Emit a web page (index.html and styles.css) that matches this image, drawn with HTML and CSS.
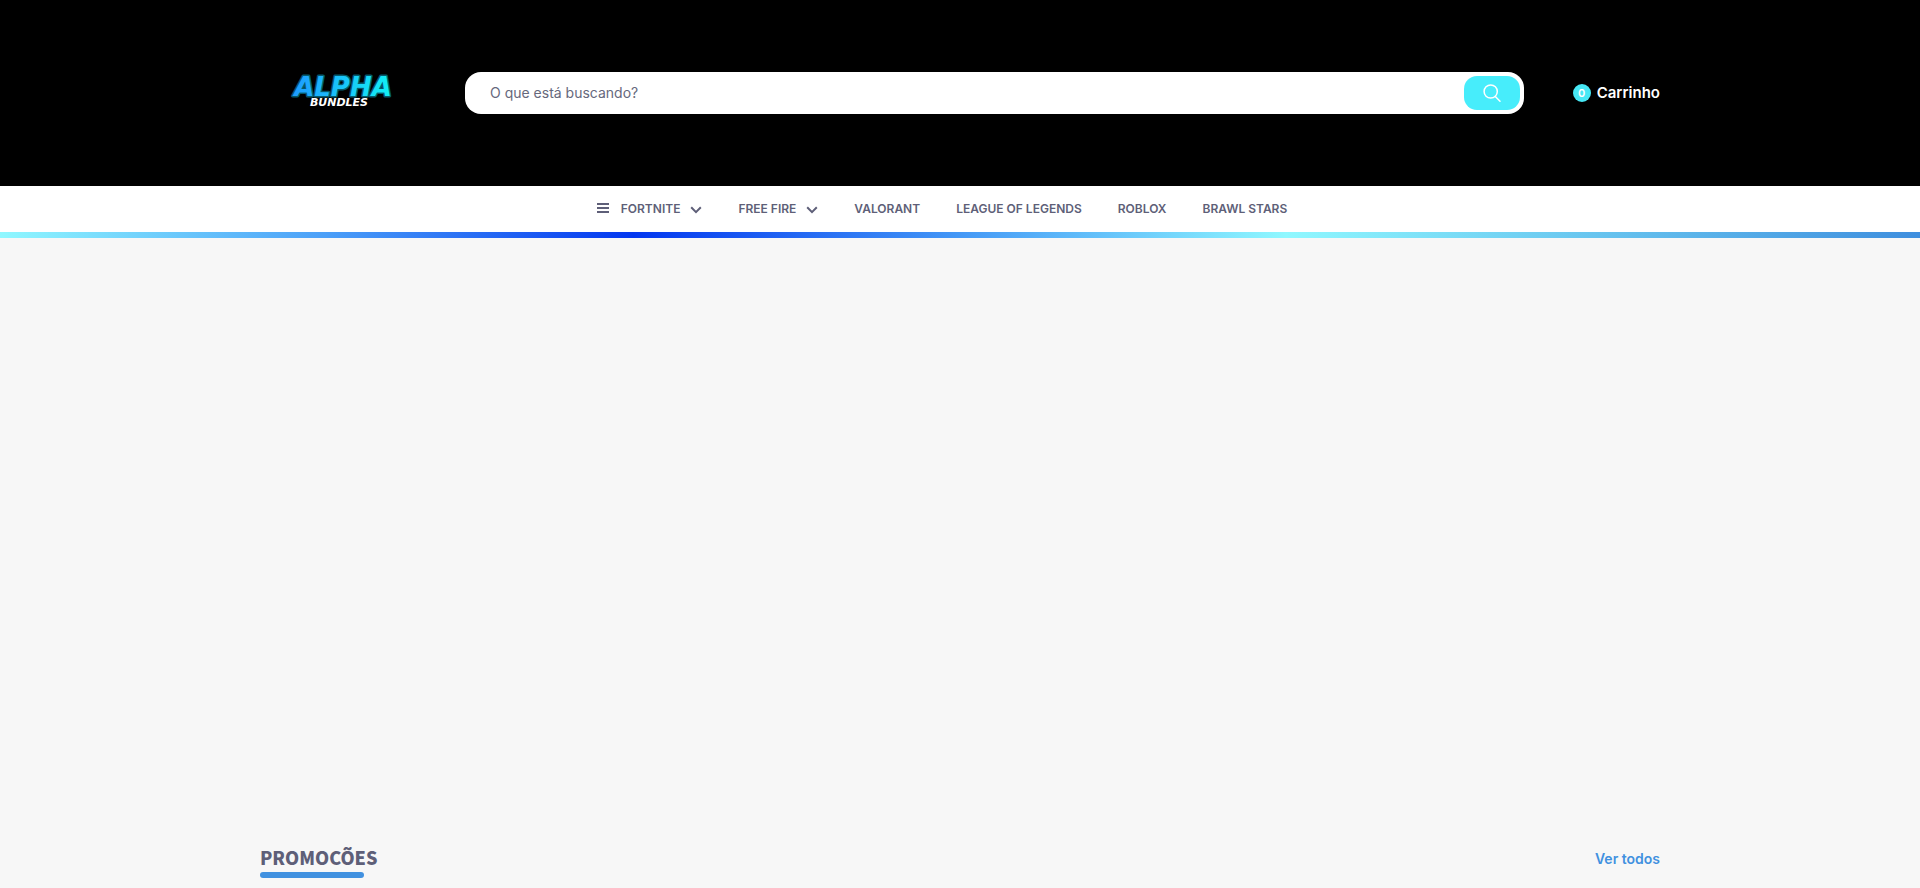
FILE: index.html
```html
<!DOCTYPE html>
<html lang="pt-BR">
<head>
<meta charset="utf-8">
<meta name="viewport" content="width=device-width, initial-scale=1">
<title>Alpha Bundles</title>
<link rel="stylesheet" href="styles.css">
</head>
<body>
<header class="header">
  <div class="container header-row">
    <a class="logo" href="#" aria-label="Alpha Bundles">
      <svg width="165" height="44" viewBox="0 0 165 44" aria-hidden="true">
        <defs>
          <linearGradient id="logo-fill" x1="0" x2="1">
            <stop offset="0" stop-color="#1e9bff"/>
            <stop offset="1" stop-color="#12f0f4"/>
          </linearGradient>
        </defs>
        <text class="logo-main" x="83" y="25" text-anchor="middle" fill="url(#logo-fill)">ALPHA</text>
        <text class="logo-sub" x="79" y="35" text-anchor="middle">BUNDLES</text>
      </svg>
    </a>
    <form class="search">
      <input class="search-input" type="text" placeholder="O que está buscando?" aria-label="O que está buscando?">
      <button class="search-button" type="button" aria-label="Buscar">
        <svg width="18" height="18" viewBox="0 0 18 18" fill="none" stroke="currentColor" stroke-width="1.5" stroke-linecap="round">
          <circle cx="7.7" cy="7.5" r="6.6"/>
          <path d="M12.3 12.4 17 17.2"/>
        </svg>
      </button>
    </form>
    <a class="cart" href="#"><span class="cart-count">0</span><span class="cart-label">Carrinho</span></a>
  </div>
</header>
<nav class="nav">
  <ul class="menu">
    <li><a class="menu-link" href="#">
      <svg class="bars" width="12" height="10" viewBox="0 0 12 10" fill="currentColor"><path d="M0 0h12v2H0zM0 4h12v2H0zM0 8h12v2H0z"/></svg>
      FORTNITE
      <svg class="chevron" width="12" height="8" viewBox="0 0 12 8" fill="none" stroke="currentColor" stroke-width="2"><path d="m1.2 1.3 4.8 4.8 4.8-4.8"/></svg>
    </a></li>
    <li><a class="menu-link" href="#">
      FREE FIRE
      <svg class="chevron" width="12" height="8" viewBox="0 0 12 8" fill="none" stroke="currentColor" stroke-width="2"><path d="m1.2 1.3 4.8 4.8 4.8-4.8"/></svg>
    </a></li>
    <li><a class="menu-link" href="#">VALORANT</a></li>
    <li><a class="menu-link" href="#">LEAGUE OF LEGENDS</a></li>
    <li><a class="menu-link" href="#">ROBLOX</a></li>
    <li><a class="menu-link" href="#">BRAWL STARS</a></li>
  </ul>
</nav>
<main>
  <div class="banner"></div>
  <section class="container section-head">
    <h2 class="section-title">PROMOCÕES</h2>
    <a class="see-all" href="#">Ver todos</a>
  </section>
</main>
</body>
</html>
```

FILE: styles.css
```css
* {
  box-sizing: border-box;
}

body {
  margin: 0;
  background: #f7f7f7;
  color: #5e5f78;
  font-family: Inter, "Liberation Sans", sans-serif;
  font-size: 14px;
}

a {
  color: inherit;
  text-decoration: none;
}

.container {
  max-width: 1440px;
  margin: 0 auto;
  padding: 0 20px;
}

.header {
  background: #000;
  color: #fff;
  padding: 71px 0;
}

.header-row {
  display: flex;
  align-items: center;
}

.logo {
  display: block;
  height: 44px;
  margin-right: 40px;
}

.logo-main {
  font: italic bold 26px "DejaVu Sans", sans-serif;
  stroke: #06596b;
  stroke-width: 3px;
  stroke-linejoin: round;
  paint-order: stroke;
}

.logo-sub {
  font: italic bold 11px "DejaVu Sans", sans-serif;
  fill: #fff;
}

.search {
  flex: 1;
  display: flex;
  align-items: center;
  height: 42px;
  margin-right: 49px;
  padding: 4px;
  border-radius: 16px;
  background: #fff;
  color: #5e5f78;
}

.search-input {
  flex: 1;
  min-width: 0;
  padding: 0 21px 2px;
  border: 0;
  outline: 0;
  background: none;
  color: inherit;
  font: inherit;
}

.search-input::placeholder {
  color: #66687c;
}

.search-button {
  display: flex;
  align-items: center;
  justify-content: center;
  width: 56px;
  height: 34px;
  padding: 0;
  border: 0;
  border-radius: 13px;
  background: #47edfb;
  color: #fff;
}

.cart {
  display: flex;
  align-items: center;
  gap: 6px;
  font-size: 15px;
  font-weight: 600;
}

.cart-label {
  padding-bottom: 1px;
}

.cart-count {
  width: 18px;
  border-radius: 50%;
  background: #47e8f5;
  font-size: 11px;
  line-height: 18px;
  text-align: center;
}

.nav {
  background: #fff;
}

.nav::after {
  content: "";
  display: block;
  height: 6px;
  background: linear-gradient(90deg, #8ff8ff 0%, #4b9ff8 17%, #0337f0 33%, #4498f6 50%, #8ff8ff 67%, #3e8ede 100%);
}

.menu {
  display: flex;
  justify-content: center;
  margin: 0;
  padding: 0;
  list-style: none;
}

.menu-link {
  display: flex;
  align-items: center;
  height: 46px;
  padding: 0 36px 2px 0;
  font-size: 12px;
  font-weight: 600;
}

.bars {
  margin-right: 12px;
}

.chevron {
  margin: 4px 0 0 10px;
}

.banner {
  height: 600px;
}

.section-head {
  display: flex;
  align-items: center;
  justify-content: space-between;
}

.section-title {
  margin: 0;
  padding-top: 4px;
  font: 900 18px/30px "Noto Sans CJK SC", sans-serif;
}

.section-title::after {
  content: "";
  display: block;
  width: 104px;
  height: 6px;
  border-radius: 3px;
  background: #4191e0;
}

.see-all {
  color: #4191e0;
  font-weight: 600;
}
```
